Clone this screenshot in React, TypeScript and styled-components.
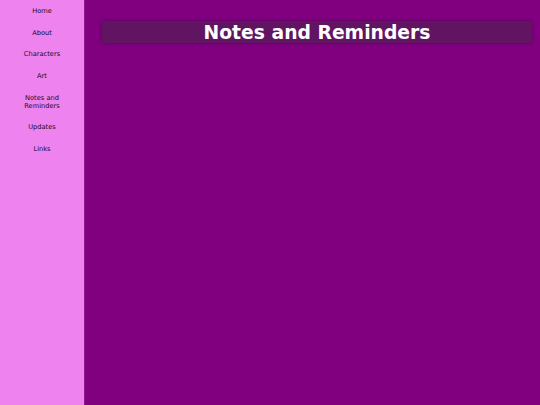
import React from "react";
import styled, { createGlobalStyle } from "styled-components";

const Global = createGlobalStyle`
  html, body { margin: 0; padding: 0; height: 100%; }
  body { background: #800080; font-family: "DejaVu Sans", Verdana, sans-serif; }
  #root { height: 100%; }
`;

const Layout = styled.div`
  display: flex;
  height: 405px;
`;

const Sidebar = styled.nav`
  width: 84px;
  flex: none;
  background: #ee82ee;
  border-right: 1px solid #8c168c;
  display: flex;
  flex-direction: column;
  padding-top: 1px;
`;

const NavItem = styled.a`
  display: block;
  padding: 7px 4px;
  text-align: center;
  font-size: 6.67px;
  line-height: 7.7px;
  color: #1a0a1a;
  text-decoration: none;
`;

const Main = styled.main`
  flex: 1;
  padding: 21px 8px 0 17px;
`;

const TitleBar = styled.h1`
  margin: 0;
  height: 22px;
  background: #601461;
  box-shadow: 0 0 3px rgba(60, 0, 60, 0.6);
  color: #fff;
  font-size: 18.75px;
  font-weight: bold;
  line-height: 24px;
  text-align: center;
`;

const items = ["Home", "About", "Characters", "Art", "Notes and Reminders", "Updates", "Links"];

export default function App() {
  return (
    <>
      <Global />
      <Layout>
        <Sidebar>
          {items.map((t) => (
            <NavItem key={t} href="#">
              {t === "Notes and Reminders" ? (
                <>
                  Notes and
                  <br />
                  Reminders
                </>
              ) : (
                t
              )}
            </NavItem>
          ))}
        </Sidebar>
        <Main>
          <TitleBar>Notes and Reminders</TitleBar>
        </Main>
      </Layout>
    </>
  );
}
